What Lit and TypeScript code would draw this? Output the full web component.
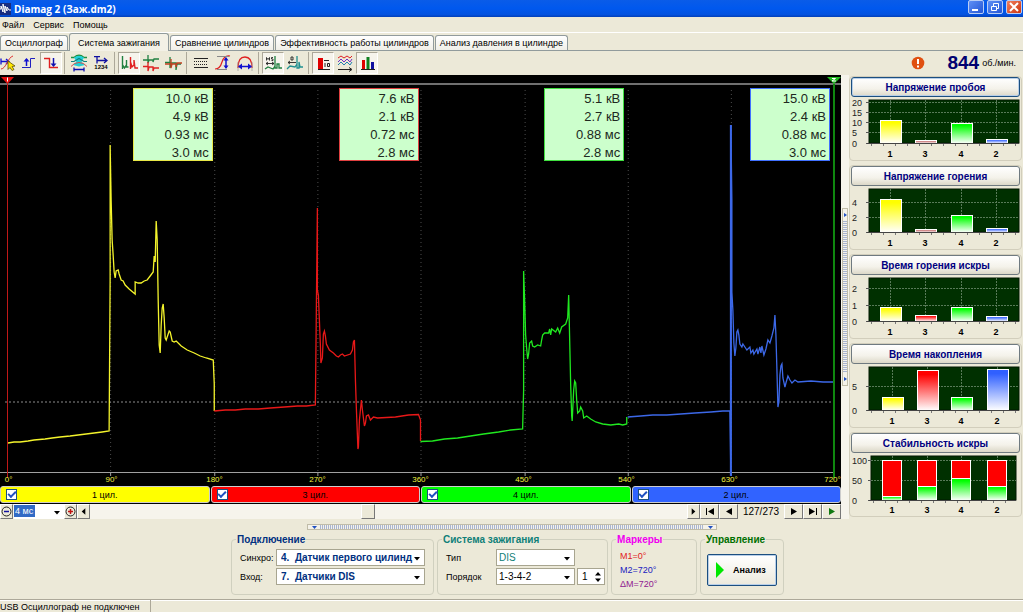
import { LitElement, html, svg, css } from "lit";
import { customElement, property } from "lit/decorators.js";
import { classMap } from "lit/directives/class-map.js";

interface ChartData {
  title: string;
  focus?: boolean;
  left: number;
  right: number;
  top: number;
  base: number;
  ticks: [string, number][];
  tops: number[];
  bars: number[];
  barWidth: number;
  stacked?: number;
}

const CHARTS: ChartData[] = [
  { title: "Напряжение пробоя", focus: true, left: 18, right: 168, top: 2, base: 45,
    ticks: [["20", 4], ["15", 14], ["10", 24], ["5", 34], ["0", 45]], tops: [22, 42, 25, 41], bars: [29, 64, 100, 135], barWidth: 21 },
  { title: "Напряжение горения", left: 18, right: 168, top: 2, base: 45,
    ticks: [["4", 15], ["2", 30], ["0", 45]], tops: [12, 42, 28, 41], bars: [29, 64, 100, 135], barWidth: 21 },
  { title: "Время горения искры", left: 18, right: 168, top: 2, base: 45,
    ticks: [["2", 12], ["1", 29], ["0", 45]], tops: [31, 39, 31, 40], bars: [29, 64, 100, 135], barWidth: 21 },
  { title: "Время накопления", left: 18, right: 168, top: 2, base: 45,
    ticks: [["5", 21], ["0", 45]], tops: [32, 5, 32, 4], bars: [31, 66, 100, 136], barWidth: 21 },
  { title: "Стабильность искры", left: 20, right: 165, top: 2, base: 46,
    ticks: [["100", 6], ["50", 26], ["0", 46]], tops: [42, 32, 24, 32], bars: [31, 66, 100, 136], barWidth: 19, stacked: 6 },
];

const CYL = ["1", "3", "4", "2"];
const BAR_COLORS = ["#ffff00", "#ff0000", "#00ff00", "#3060ff"];

@customElement("bar-panel")
class BarPanel extends LitElement {
  @property({ attribute: false }) data!: ChartData;

  static styles = css`
    :host { display: block; height: 85px; box-sizing: border-box; border: 1px solid #d2cebc; border-radius: 4px; padding: 0 1px; }
    .head { display: block; width: 100%; height: 20px; padding: 0; border: 1px solid #6f7a80; border-radius: 3px;
      background: linear-gradient(#ffffff, #f4f2ea 60%, #dcd8c8); color: #000080; font: bold 10px "Liberation Sans", sans-serif; }
    .focus { border-color: #1c4f80; box-shadow: inset 0 0 0 1px #b8cfe8; }
    svg { display: block; width: 100%; height: 62px; margin-top: 1px; overflow: visible; }
    .tick { font: 9px "Liberation Sans", sans-serif; fill: #222; }
    .cyl { font: bold 9px "Liberation Sans", sans-serif; fill: #000; text-anchor: middle; }
  `;

  render() {
    const d = this.data;
    return html`
      <button class=${classMap({ head: true, focus: !!d.focus })}>${d.title}</button>
      <svg viewBox="0 0 169 62" preserveAspectRatio="none" role="img" aria-label=${d.title}>
        <defs>
          ${BAR_COLORS.map((c, i) => svg`<linearGradient id="g${i}" x1="0" y1="0" x2="0" y2="1">
            <stop offset="0.1" stop-color=${d.stacked || i !== 1 || d.tops[1] < 42 ? (d.stacked ? "#00ff00" : c) : "#c06060"} />
            <stop offset="1" stop-color="#ffffff" /></linearGradient>`)}
        </defs>
        <rect x=${d.left} y=${d.top} width=${d.right - d.left} height=${d.base - d.top} fill="#003000" stroke="#001800" />
        ${d.ticks.map(([t, y]) => svg`
          <path d="M${d.left} ${y + 0.5}H${d.right}" stroke="#587a58" stroke-dasharray="2 1" />
          <path d="M${d.left - 3} ${y + 0.5}H${d.left}" stroke="#555" />
          <text class="tick" x="1" y=${y + 4}>${t}</text>`)}
        ${d.bars.map((x) => svg`<path d="M${x + 10.5} ${d.top}V${d.base}" stroke="#587a58" stroke-dasharray="2 1" />`)}
        ${d.bars.map((x, i) => svg`
          ${d.stacked ? svg`<rect x=${x + 0.5} y=${d.stacked + 0.5} width=${d.barWidth} height=${d.base - d.stacked} fill="#ff0000" stroke="#fff" />` : ""}
          <rect x=${x + 0.5} y=${d.tops[i] + 0.5} width=${d.barWidth} height=${d.base - d.tops[i]} fill="url(#g${i})" stroke="#fff" />
          <text class="cyl" x=${x + 10} y="59">${CYL[i]}</text>`)}
        <path d="M${d.left - 2} ${d.base + 0.5}H${d.right}" stroke="#444" />
        <path d="M${d.left + 2} ${d.base + 2}H${d.right}" stroke="#777" stroke-width="2" stroke-dasharray="1 11" />
      </svg>`;
  }
}

const icon = (body: unknown) => html`<svg class="ico" viewBox="0 0 22 20" width="22" height="20" fill="none">${body}</svg>`;

const ICONS = {
  cursor: icon(svg`<path d="M5 5.500v6M5 8.500h7M10 6l3 2.500-3 2.500" stroke="#1010d0" stroke-width="1.300"/><path d="M5 16C10 16 12 4 17 3" stroke="#e03030"/><path d="M12 8l7 5-3 .5 2 3-2 1-2-3-2 2z" fill="#ffe800" stroke="#605000" stroke-width=".8"/>`),
  stepUp: icon(svg`<path d="M4 14.500H12.500V5.500H17" stroke="#2020c0"/><path d="M8.500 13V6" stroke="#1010d0" stroke-width="1.500"/><path d="M5.500 8.500L8.500 5l3 3.500z" fill="#1010d0"/>`),
  stepDown: icon(svg`<path d="M4 5.500H9.500V14.500H18" stroke="#e02020" stroke-width="1.400"/><path d="M13.500 5v7" stroke="#1010b0" stroke-width="1.500"/><path d="M10.500 10.500h6l-3 3.500z" fill="#1010b0"/>`),
  waves: icon(svg`<path d="M3 4.500h3Q11 0 16 4.500h3" stroke="#209040" stroke-width="1.300"/><path d="M6 4.500Q11 1 16 4.500L13.500 9 17 12 11 13.500 5 12 8.500 9z" fill="#20d0d8"/><path d="M3 8.500h3l5-3 5 3h3" stroke="#108080" stroke-width="1.200"/><path d="M3 13.500Q6 9.500 11 9.500t8 4" stroke="#d05050"/><path d="M6 16.500h10M6 14.500v4M16 14.500v4" stroke="#1010b0" stroke-width="1.300"/>`),
  counter: html`<span class="counter"><svg viewBox="0 0 14 8" width="14" height="8" fill="none"><path d="M0 .7h6M3 .5V7.500M3 4.500h9M10 2l3 2.500-3 2.500" stroke="#1010a0" stroke-width="1.300"/></svg><span>1234</span></span>`,
  pair: icon(svg`<path d="M4.500 3v13M4.500 12l2 3 2-3V7M8.500 9v5h2" stroke="#208040" stroke-width="1.400"/><path d="M12.500 4v12M12.500 9l1.500 5 2-2V7l1 8h3" stroke="#e02020" stroke-width="1.400"/>`),
  stack: icon(svg`<path d="M3 7h5V2v8l1-3h4v2l1-3h5" stroke="#208040" stroke-width="1.300"/><path d="M3 13.500h5V9v9l1-4h4v4l1-3h5" stroke="#e02020" stroke-width="1.300"/>`),
  overlay: icon(svg`<path d="M3 9.500h5V4v11l1-5h5v7l1-6h4" stroke="#208040" stroke-width="1.300"/><path d="M3 11h6V6v9l1-4h4v3l1-4h5" stroke="#c04020" stroke-width="1.300"/>`),
  dashes: icon(svg`<path d="M4 5.500h14M4 14.500h14" stroke="#222"/><path d="M4 8.500h14M4 11.500h14" stroke="#222" stroke-dasharray="1 1"/>`),
  vfit: icon(svg`<path d="M3 16Q8 16 10 9T18 3" stroke="#e02020" stroke-width="1.200"/><path d="M5 3.500h12M5 16.500h10" stroke="#888"/><path d="M14 5v10" stroke="#1010d0" stroke-width="1.500"/><path d="M11.500 7.500L14 4l2.500 3.500zM11.500 12.500L14 16l2.500-3.500z" fill="#1010d0"/>`),
  hfit: icon(svg`<path d="M4 15Q4 4 11 4t7 11" stroke="#e02020" stroke-width="1.300"/><path d="M4 9v9M18 9v9" stroke="#999" stroke-width=".7"/><path d="M5 13.500h12" stroke="#1010d0" stroke-width="1.500"/><path d="M8 10.500L4 13.500l4 3zM14 10.500l4 3-4 3z" fill="#1010d0"/>`),
  measureM: icon(svg`<path d="M3 16l3-2 5 2 2-3V3v12h2v-4h2v4h3" stroke="#208040" stroke-width="1.300"/><path d="M4 10.500h8M6 9l-2 1.500L6 12M10 9l2 1.500-2 1.500M4.500 7.500v-3l1.500 2 1.500-2v3M11 4.500H9.500V6h1.500v1.500H9.500" stroke="#222" stroke-width=".9"/>`),
  measureS: icon(svg`<path d="M3 16l3-3 5 1 2-3V3v12h2V9l1 5h3" stroke="#209090" stroke-width="1.300"/><path d="M4 9.500h8M6 8L4 9.500 6 11M7 4h2v3H7z" stroke="#222" stroke-width=".9"/>`),
  value: icon(svg`<rect x="6" y="5" width="5" height="11" fill="#e00000"/><path d="M6 16.500h12M12 7.500h5M13 10v4M15.500 10.500h2v3h-2z" stroke="#222"/>`),
  multi: icon(svg`<path d="M4 5l3-2 3 2 3-2 3 2 2-2" stroke="#e02020"/><path d="M4 9l3-3 3 3 3-3 3 3 2-3" stroke="#7030c0"/><path d="M4 12l3-3 3 3 3-3 3 3 2-3" stroke="#2080b0"/><path d="M4 16.500h13M15 14.500l3 2-3 2" stroke="#222"/>`),
  bars: icon(svg`<path d="M6 7h3v9H6z" fill="#e00000"/><path d="M10.500 4h3v12h-3z" fill="#108020"/><path d="M15 9h3v7h-3z" fill="#1010a0"/><path d="M5 16.500h14" stroke="#222"/>`),
};

const TOOLS: [string, unknown, boolean][][] = [
  [["Курсор", ICONS.cursor, false], ["Фронт", ICONS.stepUp, false], ["Спад", ICONS.stepDown, true]],
  [["Наложение", ICONS.waves, false], ["Порядок", ICONS.counter, false]],
  [["Последовательно", ICONS.pair, true], ["Растр", ICONS.stack, false], ["Совмещение", ICONS.overlay, false]],
  [["Линии", ICONS.dashes, false], ["Высота", ICONS.vfit, false], ["Ширина", ICONS.hfit, false]],
  [["Метки", ICONS.measureM, true], ["Смещение", ICONS.measureS, false]],
  [["Значения", ICONS.value, true], ["История", ICONS.multi, false], ["Диаграммы", ICONS.bars, true]],
];

const TRACES: [string, string][] = [
  ["#f4f42c", "8,443 14,442 20,442 28,441 34,440 45,439 52,438 60,437 70,436 78,435 86,434 94,433 102,432 109,431 110,280 110,145 111,200 112,240 113,255 114,272 115,278 116,271 118,270 119,274 121,280 123,281 125,285 129,289 135,294 135,282 138,283 141,283 144,281 147,280 150,276 153,272 154,256 155,262 156,221 157,240 158,300 159,345 160,353 161,325 162,308 163,304 164,318 165,338 166,340 168,334 169,331 170,332 172,341 174,342 176,341 181,346 187,350 194,353 200,356 206,358 213,360 214,384 214,411"],
  ["#e81818", "214,411 225,410 235,410 245,409 258,409 270,408 284,407 297,406 306,406 315,405 317,208 317,290 318,295 319,320 320,345 320.500,363 322,358 323,334 324,331 325,336 326,344 329,350 333,353 336,356 338,357 340,355 342,354 344,356 350,354 352,350 353,342 354,340 355,380 356,410 357.500,449 358,447 359,420 361,400 362,410 364,426 365,423 366,416 368,415 370,420 373,417 377,418 395,417 408,415 418,414.500 420,420 420,441"],
  ["#20e820", "420,441.500 432,441 444,439 457,438 470,436 483,434 498,432 510,430 522,429 523,390 523,271 524,300 525,335 526,348 527,359 528,354 529,343 531,341 532,346 534,347 537,345 540,346 541,340 542,335 544,333 548,333 549,329 550,335 551,329 555,332 557,328 559,333 561,327 565,324 567,318 568,295 569,340 570,385 571,416 571.500,421 573,390 574,381 575,383 576,400 577,413 579,411 580,407 582,411 583,418 586,416 590,419 595,422 602,424 610,425 618,424 622,425 626,424 626,417"],
  ["#3c68e8", "627,417 640,416 652,415 666,415 680,414 694,413 710,412 722,411 729,411 730,475 730,125 731,200 731,292 732,310 733,343 734,356 735,348 736,332 737,330 738,335 739,344 741,347 742,344 744,347 746,350 749,347 750,353 752,350 753,354 756,349 757,354 759,347 760,353 761,346 763,355 765,349 767,340 769,343 771,336 773,328 774,315 775,335 776,370 777,407 778,402 779,375 780,366 781,364 782,378 784,387 785,383 787,376 789,380 791,383 794,380 797,382 810,381 822,382 833,382"],
];

const READOUTS = [
  { cls: "y", rows: ["10.0 кВ", "4.9 кВ", "0.93 мс", "3.0 мс"] },
  { cls: "r", rows: ["7.6 кВ", "2.1 кВ", "0.72 мс", "2.8 мс"] },
  { cls: "g", rows: ["5.1 кВ", "2.7 кВ", "0.88 мс", "2.8 мс"] },
  { cls: "b", rows: ["15.0 кВ", "2.4 кВ", "0.88 мс", "3.0 мс"] },
];

const tri = (d: string, color = "#000") => html`<svg viewBox="0 0 12 10" width="12" height="10"><path d=${d} fill=${color} /></svg>`;
const arrow = html`<svg class="dd" viewBox="0 0 8 5" width="8" height="5"><path d="M1 1h6L4 4.500z" fill="#000" /></svg>`;

@customElement("app-root")
class AppRoot extends LitElement {
  static styles = css`
    :host { display: flex; flex-direction: column; min-height: 100vh; background: #ece9d8; color: #000;
      font: 9px "Liberation Sans", sans-serif; overflow: hidden; }
    * { box-sizing: border-box; }
    button, input, select { font: inherit; color: inherit; margin: 0; }
    .title { display: flex; align-items: center; height: 17px; gap: 3px; padding-right: 1px;
      background: linear-gradient(#0a5ce8, #0058ee 50%, #0453e0 85%, #0340b8); color: #fff; }
    .title h1 { flex: 1; margin: 0; font: bold 10px "Open Sans", sans-serif; line-height: 14px; }
    .win { display: flex; gap: 3px; align-self: flex-start; }
    .win button { width: 16px; height: 14px; padding: 0; border: 1px solid #b9cdf5; border-radius: 2px;
      background: linear-gradient(135deg, #5f8ff5, #2456d6); }
    .win .close { background: linear-gradient(135deg, #f08060, #cc3410); }
    .win svg, .title svg { display: block; }
    .menu { display: flex; gap: 9px; height: 16px; align-items: center; padding-left: 2px; border-bottom: 1px solid #fff; }
    .menu a { color: #000; text-decoration: none; }
    .tabs { display: flex; align-items: flex-end; height: 18px; border-bottom: 1px solid #919b9c; }
    .tabs button { height: 15px; padding: 0 4px; border: 1px solid #919b9c; border-bottom: 0; border-radius: 3px 3px 0 0;
      background: linear-gradient(#fff, #f0efe8); margin-right: 1px; white-space: nowrap; }
    .tabs .on { height: 18px; margin-bottom: -1px; padding: 0 8px; background: #f3f1e6; }
    .tools { display: flex; align-items: center; height: 24px; }
    .set { display: flex; }
    .set:first-child { margin-left: -4px; }
    .set + .set { margin-left: 2px; border-left: 1px solid #aca899; padding-left: 3px; }
    .set button { width: 22px; height: 22px; padding: 0; border: 1px solid transparent; background: none; display: flex; align-items: center; justify-content: center; }
    .set .on { background: #f6f4ec; border-color: #aca899 #fff #fff #aca899; }
    .ico { display: block; flex: none; }
    .counter { display: flex; flex-direction: column; align-items: center; font: bold 6px "Liberation Sans", sans-serif; line-height: 6px; }
    .rpm { margin-left: auto; display: flex; align-items: center; padding-right: 7px; gap: 3px; }
    .rpm svg { margin-right: 19px; }
    .rpm b { font-size: 19px; color: #000070; }
    .main { flex: 1; display: flex; }
    .left { flex: 1; display: flex; flex-direction: column; min-width: 0; }
    .scope { flex: 1; position: relative; background: #000; display: flex; flex-direction: column; overflow: hidden; min-height: 300px; }
    .plot { position: absolute; inset: 0; width: 100%; height: 100%; }
    .plot path, .plot polyline { vector-effect: non-scaling-stroke; fill: none; }
    .reads { position: relative; display: grid; grid-template-columns: repeat(4, 1fr); justify-items: end; padding: 13px 11px 0 7px; }
    .read { width: 80px; height: 73px; border: 1px solid; background: #ccffcc; color: #202820; font-size: 13px; line-height: 18px; text-align: right; padding: 1px 3px 0; }
    .y { border-color: #e8e848; } .r { border-color: #e04040; } .g { border-color: #40e040; } .b { border-color: #4070ff; }
    .axis { position: relative; display: grid; grid-template-columns: repeat(9, 1fr); margin: auto -43px 0; height: 12px; text-align: center; line-height: 12px; color: #f0f040; font-size: 8px; }
    .chans { display: grid; grid-template-columns: repeat(4, 1fr); gap: 1px; height: 18px; background: #000; padding-bottom: 1px; }
    .chan { display: grid; grid-template-columns: 14px 1fr 14px; align-items: center; text-align: center; padding: 0 5px; border: 1px solid #ccc; border-radius: 3px; }
    .chan input { appearance: none; width: 11px; height: 11px; background: #fff; border: 1px solid #1c5180; display: grid; place-items: center; }
    .chan input:checked::before { content: ""; width: 6px; height: 3px; border: solid #2050c0; border-width: 0 0 2px 2px; transform: rotate(-45deg); margin-top: -2px; }
    .cy { background: #ff0; } .cr { background: #f00; } .cg { background: #0f0; } .cb { background: #3163ff; }
    .nav { display: flex; height: 15px; background: #f6f4ec; align-items: stretch; }
    .nav button { flex: none; padding: 0; width: 19px; border: 1px solid; border-color: #fff #777 #777 #fff; background: #ece9d8; display: flex; align-items: center; justify-content: center; }
    .nav .slim { width: 13px; }
    .pick { position: relative; display: flex; background: #fff; }
    .pick select { appearance: none; width: 100%; border: 0; padding: 0 11px 0 4px; background: transparent; border-radius: 0; outline: 0; }
    .pick .dd { position: absolute; right: 3px; top: 50%; margin-top: -2px; pointer-events: none; }
    .zoom { width: 50px; margin-left: 1px; }
    .nav .zoom select { padding: 0 1px; margin-top: 1px; background: #316ac5; color: #fff; width: 21px; height: 12px; }
    .nav input { appearance: none; flex: 1; min-width: 0; background: #f6f4ec; height: 15px; }
    .nav input::-webkit-slider-thumb { appearance: none; width: 14px; height: 15px; background: #ece9d8; border: 1px solid; border-color: #fff #777 #777 #fff; }
    .nav output { width: 46px; text-align: center; font-size: 10px; line-height: 16px; background: #ece9d8; }
    .vsplit { flex: none; width: 8px; display: flex; align-items: center; background: #f6f4ec; }
    .vbar { width: 6px; height: 178px; margin: 0 1px; border: 1px solid #c0bca8; background: repeating-linear-gradient(#a8b4d0 0 1px, #f4f2ea 1px 2px); display: flex; flex-direction: column; justify-content: space-between; }
    .vbar svg, .hbar svg { display: block; background: #f4f2ea; }
    .side { flex: none; width: 173px; margin-right: 1px; display: flex; flex-direction: column; gap: 4px; padding-top: 1px; }
    .hsplit { display: flex; justify-content: center; padding: 5px 0 4px; }
    .hbar { width: 410px; height: 6px; border: 1px solid #c0bca8; background: repeating-linear-gradient(90deg, #a8b4d0 0 1px, #f4f2ea 1px 2px); display: flex; justify-content: space-between; }
    .groups { display: flex; justify-content: center; gap: 3px; padding: 0 8px 4px 0; }
    fieldset { margin: 0; border: 1px solid #d0d0bf; border-radius: 4px; padding: 4px 8px 0; height: 61px; min-width: 0; }
    legend { padding: 0 1px; margin-left: -4px; font-weight: bold; font-size: 10px; line-height: 11px; }
    .form { display: grid; align-items: center; row-gap: 2px; }
    .form .pick { height: 17px; border: 1px solid #a8a590; }
    .conn { width: 203px; } .conn .form { grid-template-columns: 36px 149px; }
    .conn legend, .conn select { color: #003080; }
    .conn select { font-weight: bold; font-size: 10px; }
    .ign { width: 171px; } .ign .form { grid-template-columns: 48px 79px auto; column-gap: 2px; }
    .ign legend, .ign .teal { color: #108078; }
    .ign select, .spin input { font-size: 10px; padding-left: 2px; }
    .spin { display: flex; align-items: center; width: 28px; height: 17px; background: #fff; border: 1px solid #a8a590; }
    .spin input { width: 16px; border: 0; padding: 0 4px; background: none; height: 14px; }
    .mark { width: 86px; line-height: 14px; } .mark legend { color: #f000f0; }
    .mark p { margin: 0; } .m1 { color: #e02020; } .m2 { color: #2020c0; } .m3 { color: #902090; }
    .ctl { width: 84px; padding: 9px 6px 0; } .ctl legend { color: #007000; margin-left: -2px; }
    .run { display: flex; align-items: center; gap: 9px; width: 70px; height: 32px; padding: 0 7px; border: 1px solid #1c4f80; border-radius: 2px; box-shadow: inset 0 0 0 1px #b8cfe8; background: linear-gradient(#fff, #ece9dc); font-weight: bold; }
    .status { display: flex; height: 13px; border-top: 1px solid #aca899; box-shadow: inset 0 1px #fff; line-height: 15px; }
    .status span { width: 151px; border-right: 1px solid #aca899; white-space: nowrap; }
  `;

  render() {
    return html`
      <header class="title">
        <svg viewBox="0 0 11 12" width="11" height="12"><path d="M0 0h11v12H0z" fill="#182c80" /><path d="M0 6h1V3l2 6V1l2 9V3l2 5V4l2 3h2" fill="none" stroke="#fff" /></svg>
        <h1>Diamag 2 (Заж.dm2)</h1>
        <div class="win">
          <button aria-label="Свернуть"><svg viewBox="0 0 14 12" width="14" height="12"><path d="M3 8h6v2H3z" fill="#fff" /></svg></button>
          <button aria-label="Восстановить"><svg viewBox="0 0 14 12" width="14" height="12"><path d="M5.500 5V2.500h5v5H9M3.500 5.500h5v4h-5z" fill="none" stroke="#fff" /></svg></button>
          <button class="close" aria-label="Закрыть"><svg viewBox="0 0 14 12" width="14" height="12"><path d="M3 2l8 8M11 2l-8 8" stroke="#fff" stroke-width="2" /></svg></button>
        </div>
      </header>
      <nav class="menu"><a href="#">Файл</a><a href="#">Сервис</a><a href="#">Помощь</a></nav>
      <div class="tabs">
        ${["Осциллограф", "Система зажигания", "Сравнение цилиндров", "Эффективность работы цилиндров", "Анализ давления в цилиндре"].map(
          (t, i) => html`<button class=${classMap({ on: i === 1 })}>${t}</button>`)}
      </div>
      <div class="tools">
        ${TOOLS.map((set) => html`<div class="set">${set.map(([n, ic, on]) => html`<button aria-label=${n} class=${classMap({ on })}>${ic}</button>`)}</div>`)}
        <div class="rpm">
          <svg viewBox="0 0 14 14" width="14" height="14"><circle cx="7" cy="7" r="6.300" fill="#e05010" /><path d="M7 3v5M7 9.500v2" stroke="#fff" stroke-width="2" /></svg>
          <b>844</b><span>об./мин.</span>
        </div>
      </div>
      <div class="main">
        <div class="left">
          <div class="scope">
            <svg class="plot" viewBox="0 75 840 411" preserveAspectRatio="none">
              <path d="M0 84H840" stroke="#707070" stroke-width="2" />
              <path d="M0 472.500H833" stroke="#a0a0a0" />
              ${[110, 214, 317, 420, 524, 627, 730].map((x) => svg`<path d="M${x + 0.5} 90V472" stroke="#4c4c4c" stroke-dasharray="1 3" /><path d="M${x + 0.5} 472V476" stroke="#a0a0a0" />`)}
              <path d="M5 402H833" stroke="#8c8c8c" stroke-dasharray="2 2" />
              <path d="M730 125V476" stroke="#3c68e8" stroke-width="2" />
              ${TRACES.map(([c, p]) => svg`<polyline points=${p} stroke=${c} stroke-width="1.300" />`)}
              <path d="M7.500 84V478" stroke="#c01818" />
              <path d="M833 84V478" stroke="#108810" stroke-width="2" />
              <polygon points="1,77 14,77 7.500,84" fill="#e01010" />
              <polygon points="826,77 840,77 833,84" fill="#20b820" />
              <path d="M7.500 77.500v4" stroke="#fff" /><path d="M831 78.500h3.500L831 81h4" stroke="#fff" />
            </svg>
            <div class="reads">${READOUTS.map((r) => html`<div class="read ${r.cls}">${r.rows.map((t) => html`<div>${t}</div>`)}</div>`)}</div>
            <div class="axis">${[0, 90, 180, 270, 360, 450, 540, 630, 720].map((a) => html`<span>${a}°</span>`)}</div>
          </div>
          <div class="chans">
            ${[["1", "cy"], ["3", "cr"], ["4", "cg"], ["2", "cb"]].map(([n, c]) => html`<label class="chan ${c}"><input type="checkbox" checked /><span>${n} цил.</span></label>`)}
          </div>
          <div class="nav">
            <button class="slim" aria-label="Уменьшить"><svg viewBox="0 0 11 11" width="11" height="11" fill="none"><circle cx="5.500" cy="5.500" r="4.500" stroke="#222" /><path d="M3 5.500h5" stroke="#1010a0" stroke-width="1.500" /></svg></button>
            <div class="pick zoom"><select aria-label="Развёртка"><option>4 мс</option></select>${arrow}</div>
            <button class="slim" aria-label="Увеличить"><svg viewBox="0 0 11 11" width="11" height="11" fill="none"><circle cx="5.500" cy="5.500" r="4.500" stroke="#222" /><path d="M3 5.500h5M5.500 3v5" stroke="#c01010" stroke-width="1.500" /></svg></button>
            <button class="slim" aria-label="Влево">${tri("M8 1v7L4 4.500z")}</button>
            <input type="range" min="0" max="1000" value="465" aria-label="Прокрутка" />
            <button class="slim" aria-label="Вправо">${tri("M4 1v7l4-3.500z")}</button>
            <button aria-label="Первый">${tri("M2 1h1v7H2zM10 1v7L4 4.500z")}</button>
            <button aria-label="Назад">${tri("M9 1v7L3 4.500z")}</button>
            <output>127/273</output>
            <button aria-label="Вперёд">${tri("M3 1v7l6-3.500z")}</button>
            <button aria-label="Последний">${tri("M9 1h1v7H9zM2 1v7l6-3.500z")}</button>
            <button aria-label="Пуск">${tri("M3 1v7l6-3.500z", "#107810")}</button>
          </div>
        </div>
        <div class="vsplit"><div class="vbar">
          <svg viewBox="0 0 4 12" width="4" height="12"><path d="M1 4v4l3-2z" fill="#2050c0" /></svg>
          <svg viewBox="0 0 4 12" width="4" height="12"><path d="M1 4v4l3-2z" fill="#2050c0" /></svg>
        </div></div>
        <aside class="side">${CHARTS.map((c) => html`<bar-panel .data=${c}></bar-panel>`)}</aside>
      </div>
      <div class="hsplit"><div class="hbar">
        <svg viewBox="0 0 12 4" width="12" height="4"><path d="M4 1h5L6.500 4z" fill="#2050c0" /></svg>
        <svg viewBox="0 0 12 4" width="12" height="4"><path d="M4 1h5L6.500 4z" fill="#2050c0" /></svg>
      </div></div>
      <div class="groups">
        <fieldset class="conn"><legend>Подключение</legend>
          <div class="form">
            <label for="sync">Синхро:</label><div class="pick"><select id="sync"><option>4. &nbsp;Датчик первого цилинд</option></select>${arrow}</div>
            <label for="inp">Вход:</label><div class="pick"><select id="inp"><option>7. &nbsp;Датчики DIS</option></select>${arrow}</div>
          </div>
        </fieldset>
        <fieldset class="ign"><legend>Система зажигания</legend>
          <div class="form">
            <label for="type">Тип</label><div class="pick"><select id="type" class="teal"><option>DIS</option></select>${arrow}</div><span></span>
            <label for="order">Порядок</label><div class="pick"><select id="order"><option>1-3-4-2</option></select>${arrow}</div>
            <div class="spin"><input aria-label="Номер" value="1" /><svg viewBox="0 0 8 12" width="8" height="12"><path d="M1 4.500h6L4 1zM1 7.500h6L4 11z" /></svg></div>
          </div>
        </fieldset>
        <fieldset class="mark"><legend>Маркеры</legend><p class="m1">M1=0°</p><p class="m2">M2=720°</p><p class="m3">ΔM=720°</p></fieldset>
        <fieldset class="ctl"><legend>Управление</legend>
          <button class="run"><svg viewBox="0 0 9 16" width="9" height="16"><path d="M1 0v16l8-8z" fill="#00e800" /></svg>Анализ</button>
        </fieldset>
      </div>
      <footer class="status"><span>USB Осциллограф не подключен</span></footer>
    `;
  }
}
